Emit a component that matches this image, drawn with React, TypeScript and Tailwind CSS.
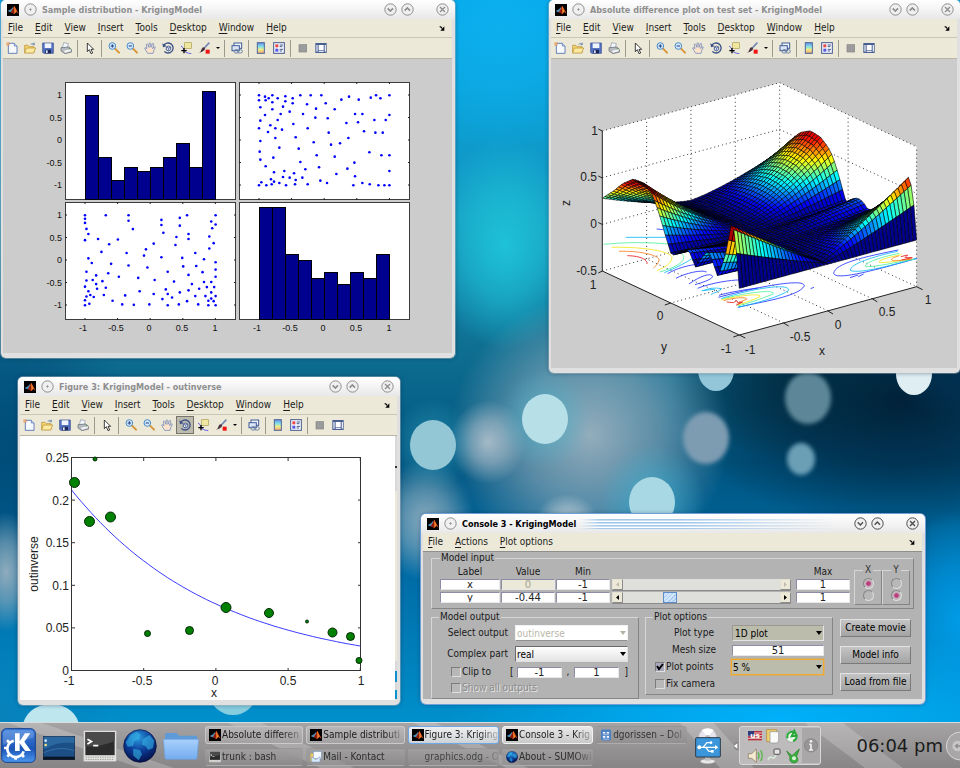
import { useState } from "react";
import type { ReactNode } from "react";

const SANS = "font-['DejaVu_Sans_Condensed','DejaVu_Sans',sans-serif]";

/* ---------- Wallpaper ---------- */

const GLOWS: [string, number, number, number, number, string, number][] = [
  ["g1", 500, 30, 110, 120, "#0fb0ee", 0.9],
  ["g2", 505, 245, 75, 105, "#1fc8dc", 0.9],
  ["g3", 900, 400, 230, 130, "#001c34", 0.95],
  ["g4", 800, 380, 130, 80, "#00283c", 0.7],
  ["g5", 590, 435, 140, 140, "#a3b6c2", 0.9],
  ["g6", 10, 440, 120, 170, "#004a78", 0.8],
  ["g7", 488, 442, 38, 42, "#b8c6d0", 0.85],
  ["g8", 425, 520, 50, 60, "#a8bcc8", 0.8],
  ["g9", 6, 572, 30, 60, "#9fb4c0", 0.9],
  ["g10", 567, 518, 30, 24, "#c0cdd4", 0.8],
  ["g11", 960, 372, 70, 50, "#003050", 0.9],
  ["g12", 780, 720, 330, 90, "#00b4ff", 0.9],
  ["g13", 960, 620, 70, 110, "#00a4f4", 0.8],
  ["g14", 0, 715, 130, 70, "#0a7cb4", 0.7],
  ["g15", 652, 500, 52, 56, "#3fb4d4", 0.6],
  ["g16", 545, 420, 46, 50, "#4fb4cc", 0.6],
  ["g17", 433, 445, 42, 46, "#3aa4c0", 0.5],
];

const BOKEH: [number, number, number, number, string][] = [
  [433, 445, 23, 25, "#93c7d6"],
  [545, 419, 23, 25, "#b7dfe8"],
  [652, 502, 23, 25, "#a8d8e4"],
  [716, 370, 18, 21, "#93c6d8"],
  [914, 374, 18, 21, "#dfeef2"],
  [51, 727, 28, 23, "#bde6ef"],
  [233, 694, 23, 21, "#86cde0"],
];

const SOFT: [number, number, number, number, string][] = [
  [706, 438, 23, 26, "#7d9cb2"],
  [808, 398, 23, 26, "#5d8798"],
  [801, 459, 14, 16, "#6b9fb6"],
];

function Wallpaper() {
  return (
    <svg className="absolute inset-0 h-full w-full" viewBox="0 0 960 722" preserveAspectRatio="none" aria-hidden="true">
      <defs>
        <linearGradient id="sky" x1="0" y1="0" x2="0" y2="1">
          <stop offset="0" stopColor="#00a8ea" />
          <stop offset=".3" stopColor="#1595bd" />
          <stop offset=".48" stopColor="#0f6f92" />
          <stop offset=".64" stopColor="#005580" />
          <stop offset=".8" stopColor="#006ca6" />
          <stop offset="1" stopColor="#0090cc" />
        </linearGradient>
        {GLOWS.map(([id, , , , , c, o]) => (
          <radialGradient id={id} key={id}>
            <stop offset="0" stopColor={c} stopOpacity={o} />
            <stop offset=".5" stopColor={c} stopOpacity={o * 0.6} />
            <stop offset="1" stopColor={c} stopOpacity="0" />
          </radialGradient>
        ))}
        <filter id="soft">
          <feGaussianBlur stdDeviation="2" />
        </filter>
      </defs>
      <rect width="960" height="722" fill="url(#sky)" />
      {GLOWS.map(([id, cx, cy, rx, ry]) => (
        <ellipse key={id} cx={cx} cy={cy} rx={rx} ry={ry} fill={`url(#${id})`} />
      ))}
      {BOKEH.map(([cx, cy, rx, ry, c]) => (
        <ellipse key={cx} cx={cx} cy={cy} rx={rx} ry={ry} fill={c} />
      ))}
      {SOFT.map(([cx, cy, rx, ry, c]) => (
        <ellipse key={cx} cx={cx} cy={cy} rx={rx} ry={ry} fill={c} filter="url(#soft)" />
      ))}
    </svg>
  );
}

/* ---------- Icons ---------- */

function MatlabIcon() {
  return (
    <svg className="h-3 w-3 shrink-0" viewBox="0 0 36 36" aria-hidden="true">
      <rect width="36" height="36" fill="#000" />
      <path d="M2 21 12 16 18 9 20 14 12 25 8 24z" fill="#4d8fb8" />
      <path d="M12 25 19 11 22 5 27 14 35 29 28 24 21 31 17 27z" fill="#d9501c" />
      <path d="M22 5 20 14 23 23 21 31 17 27 12 25 18 14z" fill="#8c1a0a" />
      <path d="M22 6 25 14 27 23 22 29 23 16z" fill="#f49a30" />
    </svg>
  );
}

type GlyphKind = "dot" | "down" | "up" | "close";

function RoundGlyph({ kind, dark }: { kind: GlyphKind; dark: boolean }) {
  const c = dark ? "#4a4a4a" : "#8d8d8d";
  return (
    <svg className="h-[13px] w-[13px]" viewBox="0 0 39 39" fill="none" stroke={c} strokeWidth="3" aria-hidden="true">
      <circle cx="19.500" cy="19.500" r="17" fill="#f0f0f0" />
      {kind === "dot" && <circle cx="19.500" cy="19.500" r="2" fill={c} />}
      {kind === "down" && <path d="M11 16l8 8 8-8" strokeWidth={dark ? 4 : 5} />}
      {kind === "up" && <path d="M11 23l8-8 8 8" strokeWidth={dark ? 4 : 5} />}
      {kind === "close" && <path d="M12 12l15 15M27 12L12 27" strokeWidth="4" />}
    </svg>
  );
}

const TOOL_ART: Record<string, ReactNode> = {
  New: (
    <>
      <path d="M7 4h18l8 8v22H7z" fill="#f6faff" stroke="#4a6cae" strokeWidth="2.500" />
      <path d="M25 4v8h8" fill="#c9daf3" stroke="#4a6cae" strokeWidth="2" />
      <path d="M6 0v12M0 6h12M2 2l8 8M10 2l-8 8" stroke="#e8742c" strokeWidth="2" />
      <circle cx="6" cy="6" r="2" fill="#fff3d0" />
    </>
  ),
  Open: (
    <>
      <path d="M2 10h10l3 4h15v18H2z" fill="#f5d878" stroke="#b58a26" strokeWidth="2" />
      <path d="M7 18h28l-6 15H2z" fill="#fdeaa2" stroke="#b58a26" strokeWidth="2" />
      <path d="M20 7q6-6 11 0M31 2v6h-6" fill="none" stroke="#44699e" strokeWidth="2" />
    </>
  ),
  Save: (
    <>
      <path d="M2 3h32v31H5l-3-3z" fill="#5574c4" stroke="#2b3f86" strokeWidth="2" />
      <rect x="8" y="4" width="20" height="14" fill="#f0f4ff" />
      <rect x="10" y="23" width="17" height="11" fill="#1c2858" />
      <rect x="12" y="25" width="5" height="8" fill="#dfe6fa" />
    </>
  ),
  Print: (
    <>
      <path d="M11 2l14 3-3 13H7z" fill="#f4f8fc" stroke="#8696a8" strokeWidth="2" />
      <path d="M3 17l24-2 8 8v7l-20 5L3 27z" fill="#b5bac0" stroke="#5f666e" strokeWidth="2" />
      <path d="M12 26l20-4v5l-17 5z" fill="#f5f5f5" />
      <circle cx="28" cy="20" r="2" fill="#4c9c3c" />
    </>
  ),
  Select: <path d="M10 3v26l6-6 5 12 5-2-5-11h8z" fill="#fff" stroke="#1b1b1b" strokeWidth="2.500" />,
  "Zoom in": (
    <>
      <path d="M21 20l12 12" stroke="#d79438" strokeWidth="6" strokeLinecap="round" />
      <circle cx="13" cy="12" r="10" fill="#d4eafc" stroke="#4d8cc8" strokeWidth="3" />
      <path d="M8 12h10M13 7v10" stroke="#1f3f86" strokeWidth="3" />
    </>
  ),
  "Zoom out": (
    <>
      <path d="M21 20l12 12" stroke="#d79438" strokeWidth="6" strokeLinecap="round" />
      <circle cx="13" cy="12" r="10" fill="#d4eafc" stroke="#4d8cc8" strokeWidth="3" />
      <path d="M8 12h10" stroke="#1f3f86" strokeWidth="3" />
    </>
  ),
  Pan: (
    <path
      d="M11 34C8 28 4 24 2 18q3-3 7 2L7 7q3-3 5 1l3 8V4q3-3 5 0l1 12 4-11q4-2 4 2l-3 13 5-6q4 0 2 4-4 6-6 16z"
      fill="#fde3cb"
      stroke="#5a7cba"
      strokeWidth="2"
    />
  ),
  Rotate: (
    <>
      <path d="M5 11A15 15 0 1 1 7 28" fill="none" stroke="#3d5288" strokeWidth="4" />
      <path d="M1 4l2 12 11-3z" fill="#3d5288" />
      <path d="M13 15l6-3 7 3v8l-6 4-7-3z" fill="#dbe4f6" stroke="#3d5288" strokeWidth="2.500" />
      <path d="M13 15l7 3 6-3M20 18v8" fill="none" stroke="#3d5288" strokeWidth="2" />
    </>
  ),
  "Data cursor": (
    <>
      <rect x="14" y="2" width="20" height="17" fill="#efe7a0" stroke="#a89c4c" strokeWidth="2" />
      <path d="M3 12q7 3 9 12t22 11" fill="none" stroke="#4a4ae8" strokeWidth="2.500" />
      <path d="M12 18v16M4 26h16" stroke="#000" strokeWidth="4" />
    </>
  ),
  Brush: (
    <>
      <path d="M34 2L19 18" stroke="#7487b4" strokeWidth="5" />
      <path d="M19 16q5 4 0 9T2 33q6-2 8-10t9-7z" fill="#4a3440" />
      <rect x="23" y="23" width="12" height="12" fill="#f01414" />
    </>
  ),
  Link: (
    <>
      <rect x="9" y="3" width="23" height="16" fill="#f2f5fb" stroke="#3f5c98" strokeWidth="3" />
      <rect x="3" y="11" width="22" height="15" fill="#dce5f4" stroke="#3f5c98" strokeWidth="3" />
      <rect x="9" y="23" width="14" height="10" rx="5" fill="none" stroke="#6d82a8" strokeWidth="3" />
      <rect x="20" y="23" width="14" height="10" rx="5" fill="none" stroke="#6d82a8" strokeWidth="3" />
    </>
  ),
  Colorbar: <rect x="7" y="2" width="21" height="32" fill="url(#cbar)" stroke="#4d6698" strokeWidth="3" />,
  Legend: (
    <>
      <rect x="2" y="2" width="32" height="32" fill="#f8faff" stroke="#44598c" strokeWidth="3" />
      <rect x="7" y="7" width="9" height="9" fill="#e84848" />
      <rect x="7" y="20" width="9" height="9" fill="#5858e0" />
      <path d="M20 9h10M20 14h8M20 22h10M20 27h7" stroke="#44598c" strokeWidth="3" />
    </>
  ),
  Hide: <rect x="6" y="8" width="23" height="22" fill="#9b9b9b" stroke="#858585" strokeWidth="2" />,
  Dock: (
    <>
      <rect x="1" y="3" width="34" height="30" fill="#4a5f92" />
      <rect x="4" y="9" width="4" height="20" fill="#e2e8f4" />
      <rect x="11" y="9" width="15" height="16" fill="#fff" />
      <rect x="29" y="9" width="4" height="20" fill="#e2e8f4" />
      <rect x="11" y="27" width="15" height="3" fill="#e2e8f4" />
    </>
  ),
};

const TOOLS = [
  "New", "Open", "Save", "Print", "|", "Select", "|", "Zoom in", "Zoom out", "Pan", "Rotate",
  "Data cursor", "Brush", "v", "|", "Link", "|", "Colorbar", "Legend", "|", "Hide", "Dock",
];

/* ---------- Window chrome ---------- */

function TitleBar({ title, active = false }: { title: string; active?: boolean }) {
  return (
    <header className="flex h-[19px] shrink-0 items-center bg-linear-to-b from-white via-[#f4f4f4] to-[#e8e8e8] pr-[6px] pl-[6px]">
      <MatlabIcon />
      <button className="ml-[5px]" aria-label="On all desktops">
        <RoundGlyph kind="dot" dark={false} />
      </button>
      <h2 className={`ml-[5px] text-[9px] leading-[12px] font-bold whitespace-nowrap ${active ? "text-black" : "text-[#8f8f8f]"}`}>
        {title}
      </h2>
      {active ? (
        <div className="mr-[18px] ml-1 h-[11px] flex-1 bg-[repeating-linear-gradient(#ffffff_0px,#ffffff_1px,#8fbbe6_1px,#dcebf8_3px)] mask-[linear-gradient(90deg,transparent,#000_8%,#000_40%,transparent)]" />
      ) : (
        <div className="flex-1" />
      )}
      <div className="flex items-center">
        <button aria-label="Minimize">
          <RoundGlyph kind="down" dark={active} />
        </button>
        <button className="ml-1" aria-label="Maximize">
          <RoundGlyph kind="up" dark={active} />
        </button>
        <button className="ml-[22px]" aria-label="Close">
          <RoundGlyph kind="close" dark={active} />
        </button>
      </div>
    </header>
  );
}

function MenuBar({ items }: { items: string[] }) {
  return (
    <nav className="flex h-[18px] shrink-0 items-center gap-3 bg-[#ece9d8] pr-[7px] pl-[5px]">
      {items.map((m) => (
        <button key={m} className="text-[10px] leading-[14px] whitespace-nowrap text-[#1c1c1c]">
          <span className="underline underline-offset-2">{m[0]}</span>
          {m.slice(1)}
        </button>
      ))}
      <svg className="ml-auto h-[5px] w-[6px]" viewBox="0 0 18 15" aria-hidden="true">
        <path d="M2 2q4 0 7 5" fill="none" stroke="#000" strokeWidth="4" />
        <path d="M16 1v13H4z" fill="#000" />
      </svg>
    </nav>
  );
}

function ToolBar({ pressed }: { pressed?: string }) {
  return (
    <div className="flex h-[22px] shrink-0 items-center border-t border-b border-[#b9b6a6] border-t-[#c9c6b6] bg-[#ece9d8]">
      {TOOLS.map((t, i) =>
        t === "|" ? (
          <span key={i} className="mr-[3px] ml-[2px] h-[17px] w-px bg-[#9d9a8c]" />
        ) : t === "v" ? (
          <button key={i} aria-label="Brush colour" className="flex w-[9px] justify-center">
            <span className="h-0 w-0 border-x-2 border-t-2 border-x-transparent border-t-black" />
          </button>
        ) : (
          <button
            key={i}
            aria-label={t}
            className={`flex h-[18px] w-[18px] items-center justify-center ${t === pressed ? "border border-[#77756b] bg-[#bdbbae]" : ""}`}
          >
            <svg className="h-3 w-3 shrink-0" viewBox="0 0 36 36" fill="none" aria-hidden="true">
              {TOOL_ART[t]}
            </svg>
          </button>
        ),
      )}
    </div>
  );
}

function Frame({ place, active = false, children }: { place: string; active?: boolean; children: ReactNode }) {
  return (
    <section
      className={`absolute flex flex-col overflow-hidden rounded-[5px] bg-[#e0e0e0] ${
        active ? "ring-1 ring-[#6f9fd8]" : "ring-1 ring-[#c4d0d6]/40"
      } shadow-[0_0_4px_rgba(0,30,60,0.5)] ${place}`}
    >
      {children}
    </section>
  );
}

const FIGURE_MENU = ["File", "Edit", "View", "Insert", "Tools", "Desktop", "Window", "Help"];

function FigureWindow(props: { title: string; place: string; pressed?: string; children: ReactNode }) {
  return (
    <Frame place={props.place}>
      <TitleBar title={props.title} />
      <div className="mr-[3px] mb-[5px] ml-[2px] flex min-h-0 flex-1 flex-col">
        <MenuBar items={FIGURE_MENU} />
        <ToolBar pressed={props.pressed} />
        <div className="min-h-0 flex-1">{props.children}</div>
      </div>
    </Frame>
  );
}

/* ---------- Scatter matrix ---------- */

const SAMPLES: [number, number][] = [
  [117, 286], [135, 290], [146, 295], [157, 286], [173, 295], [196, 289], [218, 295], [241, 286], [272, 286],
  [304, 286], [387, 290], [452, 293], [468, 286], [481, 295], [508, 286], [117, 301], [137, 301], [157, 307],
  [196, 304], [218, 310], [261, 313], [317, 310], [364, 299], [416, 299], [121, 322], [157, 328], [189, 320],
  [209, 335], [288, 326], [344, 328], [135, 345], [182, 342], [249, 342], [286, 353], [323, 355], [405, 342],
  [427, 342], [508, 345], [121, 362], [173, 360], [220, 372], [151, 376], [117, 385], [144, 396], [166, 385],
  [186, 389], [263, 385], [379, 369], [414, 367], [463, 360], [497, 360], [432, 394], [466, 398], [488, 398],
  [326, 398], [227, 412], [166, 414], [385, 414], [281, 427], [360, 430], [333, 434], [121, 423], [178, 443],
  [236, 446], [119, 455], [160, 473], [121, 479], [290, 466], [344, 470], [448, 457], [484, 466], [508, 466],
  [241, 486], [403, 488], [137, 499], [297, 502], [382, 506], [256, 508], [193, 513], [162, 517], [222, 520],
  [349, 522], [508, 513], [189, 531], [209, 533], [247, 533], [405, 529], [153, 538], [227, 540], [162, 545],
  [301, 542], [124, 547], [178, 549], [198, 556], [225, 553], [263, 553], [321, 549], [427, 549], [117, 556],
  [139, 556], [155, 553], [400, 556], [449, 553], [475, 556], [493, 556], [508, 556],
];
// Each sample as a pair of fractions of the [-1, 1] range.
const FRACTIONS = SAMPLES.map(([a, b]) => [(a - 117) / 391, (556 - b) / 270]);

const HIST_A = [95, 157, 180, 167, 171, 167, 157, 143, 167, 91];
const HIST_B = [207, 207, 254, 260, 278, 272, 284, 272, 278, 254];
const TICKS = ["-1", "-0.5", "0", "0.5", "1"];

function Panel({ x, y, ticks, children }: { x: number; y: number; ticks: boolean; children: ReactNode }) {
  return (
    <g>
      <rect x={x + 0.5} y={y + 0.5} width="170" height="117" fill="#fff" stroke="#3c3c3c" />
      {children}
      {ticks &&
        TICKS.map((t, i) => (
          <path
            key={t}
            d={`M${x + 20 + i * 32.6} ${y}v2m0 114v2M${x} ${y + 13 + i * 22.5}h2m167 0h2`}
            stroke="#222"
            fill="none"
          />
        ))}
    </g>
  );
}

function Bars({ x, base, tops }: { x: number; base: number; tops: number[] }) {
  return (
    <>
      {tops.map((t, i) => (
        <rect key={i} x={x + Math.round(i * 13.05) + 0.5} y={t + 0.5} width="13" height={base - t} fill="#00008f" stroke="#000" />
      ))}
    </>
  );
}

function SamplePlot() {
  return (
    <svg
      className="block h-full w-full bg-[#cccccc]"
      viewBox="3 59 449 294"
      fontFamily="'Liberation Sans', sans-serif"
      fontSize="9"
      fill="#111"
      role="img"
      aria-label="Scatter matrix of the sample distribution"
    >
      <Panel x={65} y={82} ticks={false}>
        <Bars x={85} base={199} tops={HIST_A} />
      </Panel>
      <Panel x={239} y={82} ticks>
        {FRACTIONS.map(([a, b], i) => (
          <circle key={i} cx={259 + a * 130.4} cy={185.3 - b * 90} r="1.300" fill="#0000ff" />
        ))}
      </Panel>
      <Panel x={65} y={202} ticks>
        {FRACTIONS.map(([a, b], i) => (
          <circle key={i} cx={85 + b * 130.6} cy={305.3 - a * 90} r="1.300" fill="#0000ff" />
        ))}
      </Panel>
      <Panel x={239} y={202} ticks={false}>
        <Bars x={259} base={319} tops={HIST_B} />
      </Panel>
      {TICKS.map((t, i) => (
        <g key={t}>
          <text x="62" y={188 - i * 22.5} textAnchor="end">{t}</text>
          <text x="62" y={308 - i * 22.5} textAnchor="end">{t}</text>
          <text x={83 + i * 33} y="331" textAnchor="middle">{t}</text>
          <text x={257 + i * 33} y="331" textAnchor="middle">{t}</text>
        </g>
      ))}
    </svg>
  );
}

/* ---------- Surface plot ---------- */

function project(x: number, y: number, z: number): [number, number] {
  const u = (x + 1) / 2;
  const v = (y + 1) / 2;
  return [739.3 + u * 177.3 - v * 137, 335 - u * 48.3 - v * 64 - ((z + 0.5) / 1.5) * 140];
}

const LEFT_EDGE: [number, number][] = [
  [0, 0], [0.02, 0.36], [0.04, 0.6], [0.06, 0.63], [0.1, 0.3], [0.155, 0.01], [0.19, 0.14], [0.225, 0.25], [0.27, 0.15],
  [0.32, 0.01], [0.37, 0.16], [0.43, 0.1], [0.494, 0.01], [0.54, 0.2], [0.59, 0.42], [0.64, 0.58], [0.7, 0.65],
  [0.774, 0.64], [0.85, 0.54], [0.92, 0.41], [1, 0.28],
];
const RIGHT_EDGE: [number, number][] = [
  [0, 0], [0.02, 0.36], [0.04, 0.56], [0.06, 0.63], [0.1, 0.52], [0.158, 0.39], [0.23, 0.24], [0.28, 0.15], [0.353, 0.08],
  [0.39, 0.14], [0.43, 0.155], [0.47, 0.12], [0.51, 0.03], [0.54, 0.17], [0.572, 0.32], [0.61, 0.47], [0.645, 0.55],
  [0.7, 0.62], [0.774, 0.64], [0.85, 0.57], [0.92, 0.44], [1, 0.26],
];

function sample(curve: [number, number][], t: number) {
  let k = 1;
  while (k < curve.length - 1 && curve[k][0] < t) k++;
  const [a, za] = curve[k - 1];
  const [b, zb] = curve[k];
  return za + ((zb - za) * (t - a)) / (b - a);
}

function height(x: number, y: number) {
  const t = (y + 1) / 2;
  const edge = sample(x < 0 ? LEFT_EDGE : RIGHT_EDGE, t);
  const power = t > 0.5 ? 1.4 : 1.1;
  return edge * Math.pow(Math.abs(x), power);
}

function jet(f: number) {
  const ch = (c: number) => Math.round(255 * Math.max(0, Math.min(1, 1.5 - Math.abs(4 * f - c))));
  return `rgb(${ch(3)},${ch(2)},${Math.max(ch(1), f < 0.25 ? 143 : 0)})`;
}

const N = 50;
const FACES: { d: string; fill: string }[] = [];
for (let j = N - 1; j >= 0; j--) {
  for (let i = N - 1; i >= 0; i--) {
    const at = (a: number, b: number) => {
      const x = -1 + (2 * a) / N;
      const y = -1 + (2 * b) / N;
      return project(x, y, height(x, y)).map((n) => n.toFixed(1)).join(",");
    };
    const z = height(-1 + (2 * i) / N, -1 + (2 * j) / N);
    FACES.push({ d: `${at(i, j)} ${at(i + 1, j)} ${at(i + 1, j + 1)} ${at(i, j + 1)}`, fill: jet(z / 0.66) });
  }
}

function segment(a: [number, number, number], b: [number, number, number]) {
  const p = project(...a);
  const q = project(...b);
  return `M${p[0]} ${p[1]}L${q[0]} ${q[1]}`;
}

const GRID = [
  ...[-0.5, 0, 0.5].flatMap((x) => [segment([x, 1, -0.5], [x, 1, 1]), segment([x, -1, -0.5], [x, 1, -0.5])]),
  segment([1, 0, -0.5], [1, 0, 1]),
  segment([1, 0, -0.5], [-1, 0, -0.5]),
  ...[-0.5, 0, 0.5, 1].flatMap((z) => [segment([-1, 1, z], [1, 1, z]), segment([1, 1, z], [1, -1, z])]),
  segment([1, 1, -0.5], [1, 1, 1]),
  segment([1, -1, -0.5], [1, -1, 1]),
].join("");

const CONTOURS: [string, string][] = [
  ["#2030ff", "M335 507l20 2M368 641C395 625 430 615 465 612M393 655C420 640 470 628 485 636M432 672C470 645 500 638 503 650 498 660 470 668 450 674M458 685C500 668 560 660 582 660M520 712C600 690 780 650 778 678 760 710 650 725 580 742M522 706C540 700 590 690 640 684M1060 570C960 590 870 610 866 640 872 660 960 640 1115 595M797 686l10-4M915 653l25-8M940 650l16-8"],
  ["#10b8f8", "M242 532h120M358 638C390 625 430 605 450 590M475 692C490 685 510 682 530 686 525 695 505 698 498 704M470 692l40-4M528 716C640 680 740 670 730 692 700 712 640 728 578 742M1058 574C980 590 910 615 917 632 950 642 1050 612 1115 596"],
  ["#50f0a0", "M176 553Q270 543 372 552M410 580C430 600 400 620 345 636M535 716C620 695 690 688 685 702 650 716 610 730 578 738M1063 580C1000 593 955 610 962 620 990 622 1060 605 1110 597"],
  ["#f4e818", "M200 562C300 560 378 575 381 592 380 615 350 625 336 632M528 720C590 705 650 700 645 710 620 722 600 728 578 735M1070 584C1030 592 1000 600 1003 607 1030 610 1060 600 1100 597"],
  ["#f88020", "M222 574C300 572 345 590 342 600 342 612 330 618 325 625M536 722C580 710 610 712 605 718L575 730M1062 588C1035 594 1030 604 1060 602L1100 597"],
  ["#e82020", "M247 587C290 588 308 600 306 612M545 726l20 2 10-6 6 8 12-4-20 10M1068 590l20-5-8 8h22l-32 7"],
];

function SurfacePlot() {
  const floor = [[-1, 1, -0.5], [-1, 1, 1], [1, 1, 1], [1, -1, 1], [1, -1, -0.5], [-1, -1, -0.5]]
    .map((p) => project(p[0], p[1], p[2]).join(","))
    .join(" ");
  return (
    <svg
      className="block h-full w-full bg-[#cccccc]"
      viewBox="551 59 406 309"
      fontFamily="'Liberation Sans', sans-serif"
      fontSize="12"
      fill="#222"
      role="img"
      aria-label="Surface plot of the absolute difference"
    >
      <polygon points={floor} fill="#fff" />
      <path d={GRID} stroke="#333" strokeWidth="1" strokeDasharray="1 3" fill="none" />
      <g transform="translate(545 60) scale(0.3333)" fill="none" strokeWidth="2.500">
        {CONTOURS.map(([c, d]) => (
          <path key={c} d={d} stroke={c} />
        ))}
      </g>
      <g stroke="#000" strokeWidth="0.600" strokeLinejoin="round">
        {FACES.map((f, i) => (
          <polygon key={i} points={f.d} fill={f.fill} />
        ))}
      </g>
      <path
        d={
          segment([-1, 1, -0.5], [-1, 1, 1]) + segment([-1, 1, -0.5], [-1, -1, -0.5]) + segment([-1, -1, -0.5], [1, -1, -0.5]) +
          "M602.300 131l-4-2M602.300 178l-4-2M602.300 224.500l-4-2M602.300 271l-4 2M670.800 303l-6 2M739.300 335l-6 2M739.300 335l6 3M783.600 323l5 3M828 311l5 3M872.300 298.800l5 3M916.600 286.700l6 3"
        }
        stroke="#222"
        fill="none"
      />
      <g textAnchor="end">
        <text x="598" y="135">1</text>
        <text x="597" y="181">0.5</text>
        <text x="597" y="228">0</text>
        <text x="597" y="275">-0.5</text>
      </g>
      <g textAnchor="middle">
        <text x="593" y="289">1</text>
        <text x="660" y="320">0</text>
        <text x="726" y="353">-1</text>
        <text x="750" y="354">-1</text>
        <text x="800" y="341">-0.5</text>
        <text x="838" y="329">0</text>
        <text x="887" y="316">0.5</text>
        <text x="928" y="304">1</text>
        <text x="664" y="351">y</text>
        <text x="822" y="355">x</text>
        <text transform="translate(570 203) rotate(-90)">z</text>
      </g>
    </svg>
  );
}

/* ---------- Curve plot ---------- */

const POINTS: [number, number, number][] = [
  [95, 459, 2], [74.5, 482.5, 5], [89.5, 521.5, 5], [110.5, 517, 5], [147.5, 633.5, 3], [189.5, 630.5, 4],
  [226, 607.5, 5], [269, 613, 4.5], [307, 621.5, 1.5], [332.5, 632.5, 4.5], [350.5, 636.5, 4], [359, 660.5, 3],
];
const CURVE = Array.from({ length: 61 }, (_, i) => {
  const x = -1 + i / 30;
  return `${(71.5 + ((x + 1) / 2) * 289).toFixed(1)},${(670.5 - (0.078 * Math.exp(-x) * 213) / 0.25).toFixed(1)}`;
}).join(" ");

function CurvePlot() {
  return (
    <div className="flex h-full">
      <svg
        className="block h-full min-w-0 flex-1 bg-white"
        viewBox="20 436 375 264"
        fontFamily="'Liberation Sans', sans-serif"
        fontSize="12"
        fill="#222"
        role="img"
        aria-label="outinverse as a function of x"
      >
        <rect x="71.500" y="457.500" width="289" height="213" fill="none" stroke="#333" />
        {[0, 1, 2, 3, 4].map((i) => (
          <path key={i} d={`M${71.5 + i * 72.2} 458v3m0 207v3`} stroke="#333" fill="none" />
        ))}
        {[0, 1, 2, 3, 4, 5].map((i) => (
          <path key={i} d={`M72 ${457.5 + i * 42.6}h3m283 0h3`} stroke="#333" fill="none" />
        ))}
        <polyline points={CURVE} fill="none" stroke="#3a3aff" />
        {POINTS.map(([x, y, r]) => (
          <circle key={x} cx={x} cy={y} r={r} fill="#008000" stroke="#062806" />
        ))}
        <g textAnchor="end">
          {["0.25", "0.2", "0.15", "0.1", "0.05", "0"].map((t, i) => (
            <text key={t} x="69" y={462 + i * 42.6}>{t}</text>
          ))}
        </g>
        <g textAnchor="middle">
          {["-1", "-0.5", "0", "0.5", "1"].map((t, i) => (
            <text key={t} x={69 + i * 73} y="685">{t}</text>
          ))}
          <text x="214" y="697">x</text>
          <text transform="translate(38 564) rotate(-90)">outinverse</text>
        </g>
      </svg>
      <div className="flex w-[2px] flex-col bg-[#d8d8d8]">
        <span className="mt-[30px] h-[2px] bg-[#333]" />
        <span className="mt-[23px] h-[170px] bg-[#ece9d8]" />
        <span className="mt-[10px] h-[11px] bg-[#1090cc]" />
        <span className="mt-[8px] h-[9px] bg-[#1090cc]" />
      </div>
    </div>
  );
}

/* ---------- Console window ---------- */

const FIELD =
  "block h-[11px] w-full min-w-0 border border-[#8c8ca4] border-r-[#e8e8e8] border-b-[#e8e8e8] bg-white p-0 text-center text-[10px] leading-[9px] text-[#222] font-['DejaVu_Sans',sans-serif] disabled:bg-[#ece9d8] disabled:text-[#a5a293]";
const GROUP = "border border-[#d6d6d6] border-r-[#858585] border-b-[#858585] min-w-0";
const LEGEND = "ml-[7px] px-px text-[10px] leading-[12px] text-[#1a1a1a]";
const TEXT = "text-[10px] leading-[12px] whitespace-nowrap text-[#1a1a1a]";

function Scroll({ label, value, disabled = false }: { label: string; value: number; disabled?: boolean }) {
  const [v, setV] = useState(value);
  const tip = disabled ? "text-[#c0bdb0]" : "text-black";
  const side = `flex w-[11px] shrink-0 items-center justify-center border border-[#e4e1d2] border-r-[#8b8b8b] border-b-[#8b8b8b] bg-[#ece9d8] ${tip}`;
  return (
    <div className="flex h-[12px] border-b border-[#8b8b8b] bg-[#dfdfdc]">
      <button className={side} aria-label={`${label} down`} disabled={disabled}>
        <svg className="h-[5px] w-[3px]" viewBox="0 0 3 5" fill="currentColor"><path d="M3 0v5L0 2.500z" /></svg>
      </button>
      <input
        type="range"
        aria-label={label}
        min={-1}
        max={1}
        step={0.01}
        value={v}
        disabled={disabled}
        onChange={(e) => setV(Number(e.target.value))}
        className={`m-0 h-full min-w-0 flex-1 appearance-none bg-transparent [&::-webkit-slider-thumb]:h-[11px] [&::-webkit-slider-thumb]:w-[14px] [&::-webkit-slider-thumb]:appearance-none [&::-webkit-slider-thumb]:border [&::-webkit-slider-thumb]:border-[#5f8cc8] [&::-webkit-slider-thumb]:bg-[repeating-linear-gradient(135deg,#a8ccf4_0px,#a8ccf4_1px,#dcecfc_1px,#c4dcf8_3px)] ${
          disabled ? "[&::-webkit-slider-thumb]:opacity-0" : ""
        }`}
      />
      <button className={side} aria-label={`${label} up`} disabled={disabled}>
        <svg className="h-[5px] w-[3px]" viewBox="0 0 3 5" fill="currentColor"><path d="M0 0v5l3-2.500z" /></svg>
      </button>
    </div>
  );
}

function Drop(props: { id: string; options: string[]; look: string; disabled?: boolean }) {
  return (
    <div className="relative min-w-0 flex-1">
      <select
        id={props.id}
        disabled={props.disabled}
        aria-label={props.id}
        className={`block h-[16px] w-full appearance-none border pr-4 text-[10px] leading-[13px] ${props.look}`}
      >
        {props.options.map((o) => (
          <option key={o}>{o}</option>
        ))}
      </select>
      <span
        className={`pointer-events-none absolute top-[6px] right-[2px] border-x-[3px] border-t-4 border-x-transparent ${
          props.disabled ? "border-t-[#b5b2a4]" : "border-t-black"
        }`}
      />
    </div>
  );
}

function Tick({ label, on = false, disabled = false }: { label: string; on?: boolean; disabled?: boolean }) {
  return (
    <label
      className={`flex items-center gap-px text-[10px] leading-[12px] whitespace-nowrap ${
        disabled ? "text-[#8c8c8c] [text-shadow:1px_1px_0_#e8e8e8]" : "text-[#1a1a1a]"
      }`}
    >
      <span className="relative flex">
        <input
          type="checkbox"
          defaultChecked={on}
          disabled={disabled}
          className="peer h-[10px] w-[10px] appearance-none border border-[#7c7c7c] border-r-[#dedede] border-b-[#dedede] bg-[#b8b8b8] checked:bg-[#a8a8bc]"
        />
        <svg className="pointer-events-none absolute inset-0 hidden h-[10px] w-[10px] peer-checked:block" viewBox="0 0 10 10" fill="none">
          <path d="M2 4l2 3 4-5" stroke="#000" strokeWidth="2" />
        </svg>
      </span>
      {label}
    </label>
  );
}

function RadioPair({ name, on }: { name: string; on: number }) {
  return (
    <fieldset className={`${GROUP} h-[41px] w-7`}>
      <legend className="mx-auto px-[2px] text-[10px] leading-[12px] text-[#333]">{name}</legend>
      <div className="flex flex-col items-center gap-px pt-[2px]">
        {["x", "y"].map((row, i) => (
          <input
            key={row}
            type="radio"
            name={`axis-${name}`}
            aria-label={`${name} axis: ${row}`}
            defaultChecked={i === on}
            className="h-[11px] w-[11px] appearance-none rounded-full border border-[#868686] border-r-[#dcdcdc] border-b-[#dcdcdc] bg-[#b8b8b8] checked:bg-[radial-gradient(circle,#bb3d7c_30%,#c8a0b4_40%,#c0bcbe_60%)]"
          />
        ))}
      </div>
    </fieldset>
  );
}

function ConsoleWindow() {
  return (
    <Frame place="top-[514px] left-[421px] h-[190px] w-[504px]" active>
      <TitleBar title="Console 3 - KrigingModel" active />
      <div className="mr-[3px] mb-[5px] ml-[2px] flex min-h-0 flex-1 flex-col bg-[#b3b3b3]">
        <MenuBar items={["File", "Actions", "Plot options"]} />
        <div className="border-t border-[#8f8f8f] pr-[8px] pl-[8px]">
          <fieldset className={`${GROUP} pr-[3px] pb-[3px] pl-2`}>
            <legend className="px-px text-[10px] leading-[12px] text-[#1a1a1a]">Model input</legend>
            <div className="flex">
              <div className="grid flex-1 grid-cols-[60px_54px_54px_1fr_54px] gap-x-px pt-[2px] text-center">
                <span className={TEXT}>Label</span>
                <span className={TEXT}>Value</span>
                <span className={TEXT}>Min</span>
                <span />
                <span className={TEXT}>Max</span>
                <input className={FIELD} aria-label="Label 1" defaultValue="x" />
                <input className={FIELD} aria-label="Value of x" defaultValue="0" disabled />
                <input className={FIELD} aria-label="Minimum of x" defaultValue="-1" />
                <div className="mr-1 ml-px"><Scroll label="x" value={0} disabled /></div>
                <input className={FIELD} aria-label="Maximum of x" defaultValue="1" />
                <input className={FIELD} aria-label="Label 2" defaultValue="y" />
                <input className={FIELD} aria-label="Value of y" defaultValue="-0.44" />
                <input className={FIELD} aria-label="Minimum of y" defaultValue="-1" />
                <div className="mr-1 ml-px"><Scroll label="y" value={-0.44} /></div>
                <input className={FIELD} aria-label="Maximum of y" defaultValue="1" />
              </div>
              <div className="ml-1 flex">
                <RadioPair name="X" on={0} />
                <RadioPair name="Y" on={1} />
              </div>
            </div>
          </fieldset>

          <div className="mt-[2px] flex items-start">
            <fieldset className={`${GROUP} w-[208px] pr-[10px] pb-[4px]`}>
              <legend className={LEGEND}>Model output</legend>
              <div className="flex flex-col gap-1 pt-[2px]">
                <div className="flex items-center gap-[7px]">
                  <label htmlFor="output" className={`${TEXT} w-[76px] text-right`}>Select output</label>
                  <Drop id="output" options={["outinverse"]} disabled look="pl-px border-[#f2f2f2] border-b-[#909090] bg-white text-[#b9b6a8] opacity-100" />
                </div>
                <div className="mt-px flex items-center gap-[7px]">
                  <label htmlFor="complex" className={`${TEXT} w-[76px] text-right`}>Complex part</label>
                  <Drop id="complex" options={["real", "imaginary"]} look="pl-px border-[#6a6a6a] border-r-[#e0e0e0] border-b-[#e0e0e0] bg-linear-to-b from-white to-[#e4e4e4] text-black" />
                </div>
                <div className="flex items-center pl-[19px]">
                  <div className="w-[60px]"><Tick label="Clip to" /></div>
                  <span className={`${TEXT} w-[7px]`}>[</span>
                  <div className="w-[46px]"><input className={FIELD} aria-label="Clip from" defaultValue="-1" /></div>
                  <span className={`${TEXT} w-[12px] text-center`}>,</span>
                  <div className="w-[46px]"><input className={FIELD} aria-label="Clip until" defaultValue="1" /></div>
                  <span className={`${TEXT} w-[9px] text-right`}>]</span>
                </div>
                <div className="pl-[19px]"><Tick label="Show all outputs" disabled /></div>
              </div>
            </fieldset>

            <fieldset className={`${GROUP} ml-[6px] w-[188px] pr-[8px] pb-[4px]`}>
              <legend className={LEGEND}>Plot options</legend>
              <div className="flex flex-col gap-[3px] pt-[2px]">
                <div className="flex items-center">
                  <label htmlFor="plot" className={`${TEXT} w-[86px] pl-[10px] text-center`}>Plot type</label>
                  <Drop id="plot" options={["1D plot", "2D plot"]} look="pl-[2px] border-[#9a9a90] border-r-[#e4e4e4] border-b-[#e4e4e4] bg-[#bcbcac] text-black" />
                </div>
                <div className="flex items-center">
                  <label htmlFor="mesh" className={`${TEXT} w-[86px] pl-[10px] text-center`}>Mesh size</label>
                  <div className="min-w-0 flex-1"><input id="mesh" className={FIELD} defaultValue="51" /></div>
                </div>
                <div className="flex items-center pl-[9px]">
                  <div className="w-[76px]"><Tick label="Plot points" on /></div>
                  <Drop id="percent" options={["5 %", "10 %"]} look="pl-px border-[#f2a92c] ring-1 ring-[#f2a92c]/40 bg-[#bcbcac] text-black" />
                </div>
                <div className="pl-[9px]"><Tick label="Fix camera" /></div>
              </div>
            </fieldset>

            <div className="mt-[8px] ml-[7px] flex w-[71px] flex-col gap-[9px]">
              {["Create movie", "Model info", "Load from file"].map((b) => (
                <button
                  key={b}
                  className="h-[18px] border border-[#e2e2e2] border-r-[#7a7a7a] border-b-[#7a7a7a] bg-linear-to-b from-[#c4c4c4] to-[#a4a4a4] text-[10px] leading-[14px] whitespace-nowrap text-black"
                >
                  {b}
                </button>
              ))}
            </div>
          </div>
        </div>
      </div>
    </Frame>
  );
}

/* ---------- Taskbar ---------- */

function KMenu() {
  return (
    <svg className="h-[35px] w-[35px]" viewBox="0 0 105 105" aria-hidden="true">
      <rect x="2" y="2" width="101" height="101" rx="14" fill="url(#kblue)" stroke="#12408f" strokeWidth="3" />
      <path d="M6 50q45-4 92-22V18Q98 7 87 7H18Q6 7 6 18z" fill="#fff" opacity=".18" />
      <path d="M38 38A25 25 0 1 0 68 70" fill="none" stroke="#fff" strokeWidth="8" />
      <path d="M44 84v11M26 78l-7 8M20 60H9M26 44l-8-7M62 79l7 8" stroke="#fff" strokeWidth="8" />
      <path d="M42 16h14v24l16-24h16L70 41l20 28H73L56 46v23H42z" fill="#fff" />
    </svg>
  );
}

function DesktopIcon() {
  return (
    <svg className="h-6 w-8" viewBox="0 0 96 72" aria-hidden="true">
      <rect x="1" y="1" width="94" height="70" fill="#1c4f86" stroke="#0c2444" strokeWidth="2" />
      <path d="M2 40Q50 12 94 22V2H2z" fill="#2c68a0" />
      <path d="M2 50Q50 28 94 44" stroke="#4080b8" strokeWidth="2" fill="none" />
      <rect x="1" y="62" width="94" height="9" fill="#0b1524" />
      <circle cx="8" cy="14" r="4" fill="#cfe8ff" />
      <circle cx="8" cy="27" r="4" fill="#f0e080" />
    </svg>
  );
}

function TerminalArt() {
  return (
    <>
      <rect x="1" y="1" width="98" height="92" rx="4" fill="#e0e0de" stroke="#9a9a98" strokeWidth="2" />
      <rect x="7" y="6" width="86" height="68" fill="#2c2c2c" />
      <path d="M7 6h86v26Q50 50 7 48z" fill="#4a4a4a" />
      <path d="M13 27l12 7-12 7M30 46h15" stroke="#fff" strokeWidth="5" fill="none" />
      <path d="M8 80h84M8 87h84" stroke="#a4a4a0" strokeWidth="3" strokeDasharray="4 3" />
    </>
  );
}

function GlobeArt() {
  return (
    <>
      <circle cx="50" cy="50" r="48" fill="url(#globe)" stroke="#04103c" strokeWidth="2" />
      <path d="M22 18l18-10 12 8-6 14-12 6-4 14-16 2-6-12zM58 30l20-12 14 16-4 22-14 6-8-12-10-4zM30 58l20 4 6 12-10 18-16-14z" fill="#36b4e4" opacity=".6" />
    </>
  );
}

function FolderIcon() {
  return (
    <svg className="h-7 w-9" viewBox="0 0 108 84" aria-hidden="true">
      <path d="M6 8q0-5 5-5h30l7 8h50q5 0 5 5v10H6z" fill="#5f9ad8" />
      <path d="M1 22h106l-5 56q0 4-5 4H11q-5 0-5-4z" fill="url(#folder)" stroke="#6ba0dc" strokeWidth="2" />
    </svg>
  );
}

function UsbIcon() {
  return (
    <svg className="h-9 w-[26px]" viewBox="0 0 78 108" aria-hidden="true">
      <circle cx="38" cy="28" r="27" fill="#e8e4ee" stroke="#b8b8c0" strokeWidth="2" />
      <path d="M38 28L20 6q18-10 36 0z" fill="#fff" />
      <circle cx="38" cy="28" r="7" fill="#bbb" />
      <ellipse cx="38" cy="100" rx="22" ry="7" fill="#e8e8e8" stroke="#a0a0a0" />
      <rect x="30" y="86" width="16" height="12" fill="#c0c0c0" />
      <rect x="2" y="29" width="74" height="58" rx="3" fill="#3c96dc" stroke="#2b3b48" strokeWidth="3" />
      <path d="M14 58h48M24 58l12-14h10M32 58l10 12h8" stroke="#fff" strokeWidth="4" fill="none" />
      <circle cx="13" cy="58" r="6" fill="#fff" />
      <path d="M60 51l10 7-10 7z" fill="#fff" />
      <circle cx="48" cy="44" r="4" fill="#fff" />
      <rect x="48" y="66" width="8" height="8" fill="#fff" />
    </svg>
  );
}

type TaskKind = "matlab" | "term" | "mail" | "none" | "globe" | "dolphin";

function TaskGlyph({ kind }: { kind: TaskKind }) {
  if (kind === "matlab") return <MatlabIcon />;
  return (
    <svg className="h-3 w-3 shrink-0" viewBox="0 0 100 100" aria-hidden="true">
      {kind === "term" && <TerminalArt />}
      {kind === "globe" && <GlobeArt />}
      {kind === "mail" && (
        <>
          <rect x="4" y="20" width="70" height="66" rx="6" fill="#f0c850" />
          <rect x="28" y="4" width="66" height="60" fill="#f4f8ff" stroke="#7a9cc8" strokeWidth="5" />
          <path d="M14 48l34 24 36-24v44H14z" fill="#dceafa" stroke="#7a9cc8" strokeWidth="5" />
        </>
      )}
      {kind === "dolphin" && (
        <>
          <rect x="8" y="4" width="84" height="92" rx="12" fill="#4c80c4" />
          <path d="M24 24h20v14H24zM56 24h20v14H56zM24 58h20v14H24zM56 58h20v14H56z" fill="#fff" />
          <path d="M24 48h52M24 84h52" stroke="#cfe0f8" strokeWidth="6" />
        </>
      )}
    </svg>
  );
}

function Task({ kind, label, look, tone }: { kind: TaskKind; label: string; look: string; tone: string }) {
  return (
    <button className={`flex h-[18px] min-w-0 items-center overflow-hidden rounded-[3px] border pl-[3px] ${look}`}>
      <TaskGlyph kind={kind} />
      <span
        className={`ml-px min-w-0 flex-1 overflow-hidden text-left text-[10px] leading-[14px] whitespace-nowrap mask-[linear-gradient(90deg,#000_75%,transparent_105%)] ${tone}`}
      >
        {label}
      </span>
    </button>
  );
}

const RAISED = "border-[#d4d4d4]/70 bg-linear-to-b from-[#b8b6b6] to-[#a3a1a1]";
const BRIGHT = "border-[#f2f2f2] bg-linear-to-b from-[#e8e8e8] to-[#c9c9c9]";
const FOCUSED = "border-[#6fa8e8] bg-linear-to-b from-[#eeeeee] to-[#cfd3d8]";
const SUNK = "border-transparent border-b-[#c4c4c4]/40 bg-linear-to-b from-[#a09e9e] to-[#8e8c8c]/60";

function Tray() {
  return (
    <div className="flex h-[39px] w-[82px] items-center rounded-[3px] border border-[#d8d8d8] bg-[#bdbbbb]">
      <svg className="h-[37px] w-[62px]" viewBox="0 0 186 111" aria-hidden="true">
        <rect x="24" y="12" width="42" height="28" fill="#b8303c" />
        <path d="M24 18h42M24 26h42M24 34h42" stroke="#e8c8cc" strokeWidth="3" />
        <rect x="24" y="12" width="18" height="14" fill="#2c3c7c" />
        <text x="45" y="34" textAnchor="middle" fontFamily="'DejaVu Sans',sans-serif" fontWeight="bold" fontSize="22" fill="#fff">us</text>
        <path d="M80 8h30v36H80z" fill="#f0d070" stroke="#a88830" strokeWidth="2" />
        <path d="M90 14h26v28l-6 6H90z" fill="#fafafa" stroke="#909090" strokeWidth="2" />
        <circle cx="155" cy="28" r="18" fill="#e8f4e8" stroke="#a0a8a0" strokeWidth="3" />
        <path d="M143 34a14 14 0 1 1 16 8M163 12l6 14-14 2z" fill="none" stroke="#28a838" strokeWidth="6" />
        <path d="M25 80h10l14-14v40L35 94H25z" fill="#f4ead0" stroke="#807050" strokeWidth="2" />
        <path d="M54 76q6 10 0 20M62 70q9 16 0 32" stroke="#58b848" strokeWidth="4" fill="none" />
        <path d="M84 100q4-14 12-8t14-14" stroke="#d8e8d8" strokeWidth="5" fill="none" />
        <rect x="102" y="66" width="18" height="16" rx="3" fill="#e4e4e4" stroke="#505050" strokeWidth="3" />
        <path d="M140 72l16 14 22-20-8 22q10 18-8 20-16-2-12-18z" fill="#3cb040" stroke="#1c7c24" strokeWidth="2" />
        <circle cx="162" cy="94" r="6" fill="#d8f4d8" />
      </svg>
      <svg className="h-[35px] w-[18px] bg-[#a9a7a7]" viewBox="0 0 54 105" aria-hidden="true">
        <circle cx="27" cy="52" r="20" fill="#969494" stroke="#808080" strokeWidth="2" />
        <path d="M27 49v17M22 49h6M21 66h12" stroke="#f0f0f0" strokeWidth="5" />
        <circle cx="27" cy="40" r="4" fill="#f0f0f0" />
      </svg>
    </div>
  );
}

function Taskbar() {
  return (
    <footer className="relative flex h-[46px] shrink-0 items-center overflow-hidden border-t border-[#d8dde0] bg-linear-to-b from-[#a5a3a3] to-[#878585]">
      <svg className="absolute inset-0 h-full w-full" viewBox="0 0 960 46" preserveAspectRatio="none" aria-hidden="true">
        <path d="M8 0h34l132 46h-34zM228 0h34l92 46h-34zM414 0h22l92 46h-22zM680 0h34l40 46h-34zM805 0h38l60 46h-38z" fill="#fff" opacity=".2" />
      </svg>
      <nav className="relative flex items-center pl-[1px]" aria-label="Launchers">
        <button aria-label="Application launcher"><KMenu /></button>
        <button className="ml-[7px] pt-1" aria-label="Show desktop"><DesktopIcon /></button>
        <button className="ml-2" aria-label="Konsole">
          <svg className="h-8 w-[34px]" viewBox="0 0 100 94" aria-hidden="true"><TerminalArt /></svg>
        </button>
        <button className="ml-[6px]" aria-label="Konqueror">
          <svg className="h-[34px] w-[34px]" viewBox="0 0 100 100" aria-hidden="true"><GlobeArt /></svg>
        </button>
        <button className="ml-[6px]" aria-label="Home folder"><FolderIcon /></button>
      </nav>
      <div className="relative ml-[6px] grid min-w-0 flex-1 grid-cols-[98fr_98fr_91fr_91fr_91fr] gap-x-[3px] gap-y-1 pt-px">
        <Task kind="matlab" label="Absolute differen" look={RAISED} tone="text-[#1c1c1c]" />
        <Task kind="matlab" label="Sample distributi" look={RAISED} tone="text-[#1c1c1c]" />
        <Task kind="matlab" label="Figure 3: Kriging" look={FOCUSED} tone="text-[#1c1c1c]" />
        <Task kind="matlab" label="Console 3 - Krig" look={BRIGHT} tone="text-[#1c1c1c]" />
        <Task kind="dolphin" label="dgorissen – Dol" look={SUNK} tone="text-[#333]" />
        <Task kind="term" label="trunk : bash" look={SUNK} tone="text-[#2c2c2c]" />
        <Task kind="mail" label="Mail - Kontact" look={SUNK} tone="text-[#2c2c2c]" />
        <Task kind="none" label="graphics.odg - O" look={SUNK} tone="text-[#444]" />
        <Task kind="globe" label="About - SUMOwi" look={SUNK} tone="text-[#2c2c2c]" />
      </div>
      <div className="relative ml-2 flex items-center">
        <button aria-label="Device notifier"><UsbIcon /></button>
        <svg className="ml-[11px] h-[10px] w-[7px]" viewBox="0 0 21 30" aria-hidden="true">
          <path d="M18 2a13 13 0 0 0 0 26z" fill="#888" />
          <path d="M16 7v16L6 15z" fill="#fff" />
        </svg>
        <Tray />
        <time className="ml-[35px] text-[18px] leading-[24px] whitespace-nowrap text-[#1c1c1c] font-['DejaVu_Sans',sans-serif]">06:04 pm</time>
        <svg className="ml-[2px] h-[32px] w-[15px]" viewBox="0 0 45 96" aria-hidden="true">
          <circle cx="46" cy="48" r="42" fill="#a8a6a6" stroke="#d8d8d8" strokeWidth="3" />
          <circle cx="38" cy="48" r="16" fill="#c8c6c6" />
          <path d="M32 48h14M38 42l-6 6 6 6" stroke="#8c8a8a" strokeWidth="4" fill="none" />
        </svg>
      </div>
    </footer>
  );
}

function SharedGradients() {
  return (
    <svg className="absolute h-0 w-0" aria-hidden="true">
      <defs>
        <linearGradient id="cbar" x1="0" y1="0" x2="0" y2="1">
          <stop offset="0" stopColor="#7088e8" />
          <stop offset=".35" stopColor="#7ce0e8" />
          <stop offset=".65" stopColor="#f0ec88" />
          <stop offset="1" stopColor="#f0a070" />
        </linearGradient>
        <linearGradient id="kblue" x1="0" y1="0" x2="0" y2="1">
          <stop offset="0" stopColor="#3f80dc" />
          <stop offset=".6" stopColor="#1c56b8" />
          <stop offset="1" stopColor="#4c98f0" />
        </linearGradient>
        <radialGradient id="globe" cx=".45" cy=".25" r=".8">
          <stop offset="0" stopColor="#2c9ce0" />
          <stop offset=".5" stopColor="#0c3c98" />
          <stop offset="1" stopColor="#040c40" />
        </radialGradient>
        <linearGradient id="folder" x1="0" y1="0" x2="0" y2="1">
          <stop offset="0" stopColor="#a8d0fc" />
          <stop offset="1" stopColor="#74acf0" />
        </linearGradient>
      </defs>
    </svg>
  );
}

export default function App() {
  return (
    <div className={`flex h-screen w-full flex-col overflow-hidden ${SANS}`}>
      <SharedGradients />
      <main className="relative min-h-0 flex-1 overflow-hidden">
        <Wallpaper />
        <FigureWindow title="Sample distribution - KrigingModel" place="top-0 left-px h-[358px] w-[454px]">
          <SamplePlot />
        </FigureWindow>
        <FigureWindow title="Absolute difference plot on test set - KrigingModel" place="top-0 left-[549px] h-[373px] w-[411px]">
          <SurfacePlot />
        </FigureWindow>
        <FigureWindow title="Figure 3: KrigingModel - outinverse" place="top-[377px] left-[18px] h-[328px] w-[382px]" pressed="Rotate">
          <CurvePlot />
        </FigureWindow>
        <ConsoleWindow />
      </main>
      <Taskbar />
    </div>
  );
}
